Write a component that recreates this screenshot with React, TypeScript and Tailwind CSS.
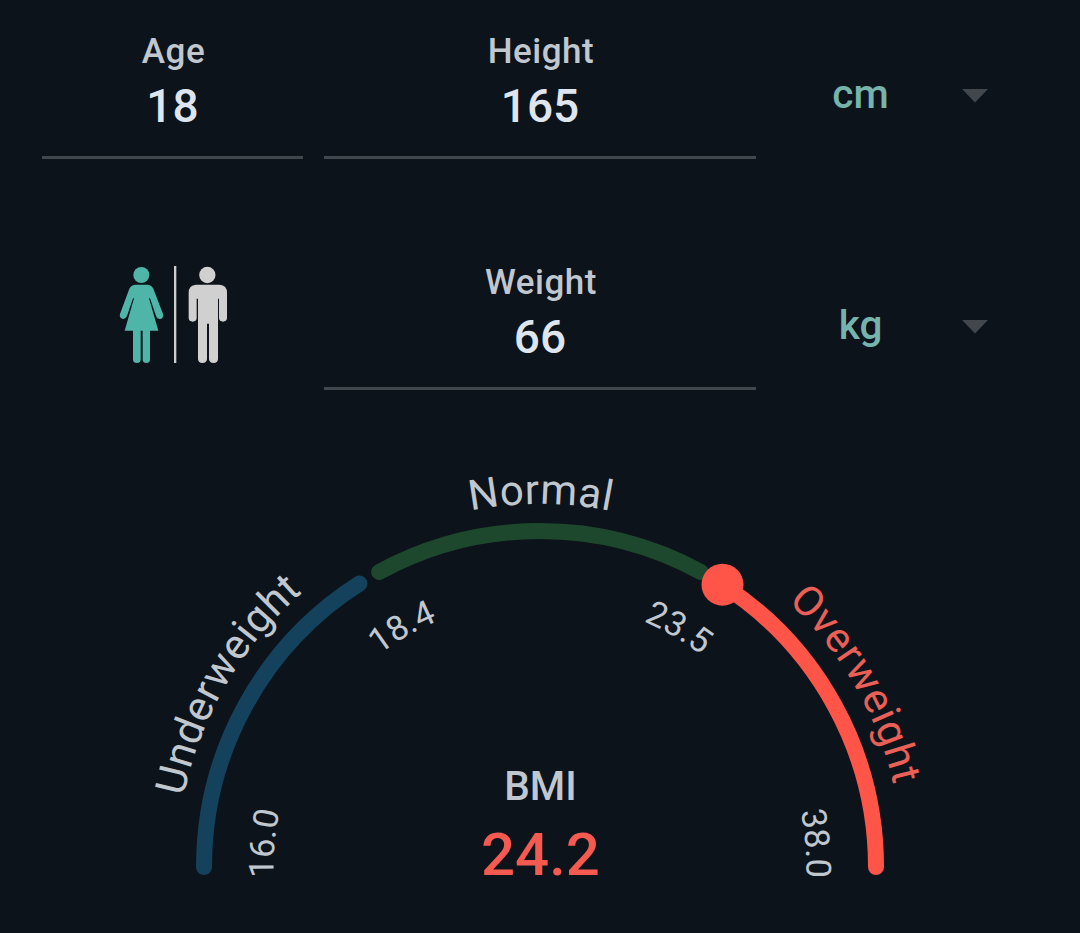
const CX = 540;
const CY = 437;

const arc = (r: number) => `M${CX - r} ${CY}A${r} ${r} 0 0 1 ${CX + r} ${CY}`;

const point = (deg: number) => {
  const a = (deg * Math.PI) / 180;
  return `${(CX - 336 * Math.cos(a)).toFixed(2)} ${(CY - 336 * Math.sin(a)).toFixed(2)}`;
};

const segment = (from: number, to: number) => `M${point(from)}A336 336 0 0 1 ${point(to)}`;

function ArcLabel({ text, angle, path, className }: { text: string; angle: number; path: string; className: string }) {
  return (
    <g transform={`rotate(${angle} ${CX} ${CY})`}>
      <text textAnchor="middle" className={className}>
        <textPath href={`#${path}`} startOffset="50%">
          {text}
        </textPath>
      </text>
    </g>
  );
}

function Field({ label, value, className }: { label: string; value: string; className: string }) {
  return (
    <div className={`flex h-[159px] flex-col items-center border-b-[3px] border-[#41474d] pt-[31px] font-medium ${className}`}>
      <span className="pl-[2px] text-[35px] leading-[42px] tracking-[0.5px] text-[#c0c7cf]">{label}</span>
      <span className="mt-[6px] text-[46px] leading-[54px] text-[#dfe5ee]">{value}</span>
    </div>
  );
}

function Unit({ name }: { name: string }) {
  return (
    <div className="ml-[21px] flex h-[159px] flex-1 items-start pt-[69px]">
      <span className="w-[167px] text-center text-[40.5px] leading-[50px] font-medium text-[#75b3ac]">{name}</span>
      <svg className="mt-[20px] ml-[18px] h-[14px] w-[26px]" viewBox="0 0 26 14">
        <path d="M0 0h26L13 13.5z" fill="#41474d" />
      </svg>
    </div>
  );
}

function GenderToggle() {
  return (
    <div className="mr-[21px] flex h-[159px] w-[261px] justify-center pt-[34px]">
      <svg className="h-[100px] w-[110px]" viewBox="54 45 330 300">
        <g fill="#4fb5a9">
          <circle cx="124" cy="75" r="24" />
          <path d="M105 104H144Q155 105 160 116L189 192Q192 202 184 206Q174 210 169 200L150 145H147L175 242H150V330Q149 339 139 339Q129 339 128 330V242H122V330Q121 339 111 339Q100 339 99 330V242H74L102 145H99L81 198Q76 209 66 206Q57 202 60 192L88 116Q93 105 105 104Z" />
        </g>
        <path d="M222 48h7v291h-7z" fill="#cdcdcd" />
        <g fill="#d0d0d0">
          <circle cx="322" cy="75" r="24.500" />
          <path d="M288 104H359Q381 106 381 128V205Q380 215 369 215Q358 215 357 205V146H354V328Q353 339 341 339Q328 339 327 328V221H321V328Q320 339 307 339Q295 339 294 328V146H290V205Q289 215 278 215Q267 215 266 205V128Q266 106 288 104Z" />
        </g>
      </svg>
    </div>
  );
}

function Gauge() {
  const outer = "fill-[#c0c7cf] text-[42px] tracking-[0.5px]";
  const inner = "fill-[#c0c7cf] text-[34.5px]";
  return (
    <svg className="block h-[503px] w-[1080px]" viewBox="0 0 1080 503">
      <defs>
        <path id="outer-arc" d={arc(363)} />
        <path id="inner-arc" d={arc(266.5)} />
      </defs>
      <g fill="none" strokeWidth="16" strokeLinecap="round">
        <path d={segment(0, 57.5)} stroke="#14425c" />
        <path d={segment(61.4, 118.6)} stroke="#1e482d" />
        <path d={segment(122.9, 180)} stroke="#ff5549" />
      </g>
      <circle cx="722.5" cy="154.700" r="21" fill="#ff5549" />
      <ArcLabel text="Underweight" angle={-59.8} path="outer-arc" className={outer} />
      <ArcLabel text="Normal" angle={0.1} path="outer-arc" className={outer} />
      <ArcLabel text="Overweight" angle={60} path="outer-arc" className="fill-[#ea6056] text-[42px] tracking-[0.5px]" />
      <ArcLabel text="16.0" angle={-85.1} path="inner-arc" className={inner} />
      <ArcLabel text="18.4" angle={-29.9} path="inner-arc" className={inner} />
      <ArcLabel text="23.5" angle={30.1} path="inner-arc" className={inner} />
      <ArcLabel text="38.0" angle={85.1} path="inner-arc" className={inner} />
      <text x="540.5" y="370" textAnchor="middle" className="fill-[#c0c7cf] text-[40.5px] font-medium">
        BMI
      </text>
      <text x="540.5" y="445" textAnchor="middle" className="fill-[#f55a50] text-[60px] font-medium">
        24.2
      </text>
    </svg>
  );
}

export default function App() {
  return (
    <main className="flex h-[933px] w-[1080px] flex-col overflow-hidden bg-[#0c131a] font-['Roboto',sans-serif]">
      <div className="flex h-[231px] pl-[42px]">
        <Field label="Age" value="18" className="mr-[21px] w-[261px]" />
        <Field label="Height" value="165" className="w-[432px]" />
        <Unit name="cm" />
      </div>
      <div className="flex h-[199px] pl-[42px]">
        <GenderToggle />
        <Field label="Weight" value="66" className="w-[432px]" />
        <Unit name="kg" />
      </div>
      <Gauge />
    </main>
  );
}
